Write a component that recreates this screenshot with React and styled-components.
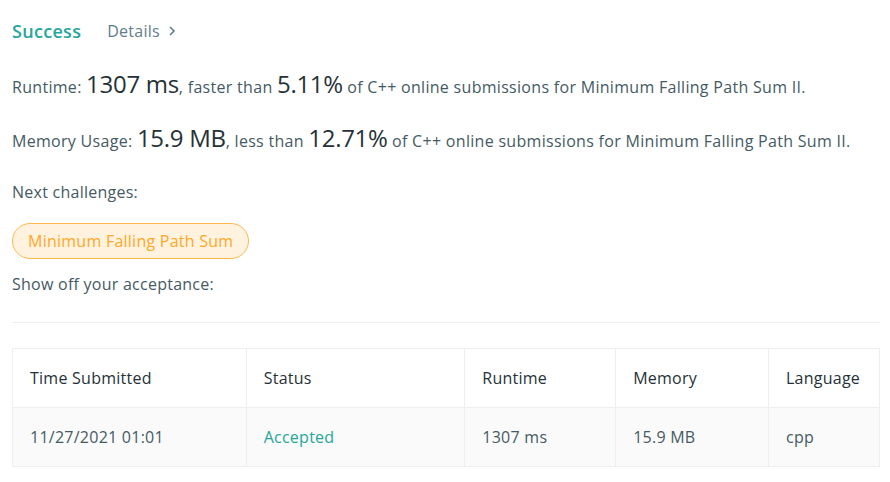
import React from "react";
import styled, { createGlobalStyle } from "styled-components";

const GlobalStyle = createGlobalStyle`
  body {
    margin: 0;
    background: #fff;
    font-family: "Open Sans", "Noto Sans", sans-serif;
    color: #455a64;
  }
`;

const Page = styled.div`
  padding: 0 10px 0 12px;
  width: 890px;
  box-sizing: border-box;
`;

const ResultHeader = styled.div`
  display: flex;
  align-items: center;
  height: 30px;
  margin-top: 16px;
`;

const Status = styled.span`
  color: #26a69a;
  font-size: 18px;
  font-weight: 600;
  letter-spacing: 0.3px;
`;

const DetailsLink = styled.span`
  display: flex;
  align-items: center;
  color: #607d8b;
  font-size: 16px;
  letter-spacing: 0.25px;
  margin-left: 26px;

  svg {
    margin-left: 8px;
  }
`;

const StatLine = styled.p`
  margin: 0;
  font-size: 16px;
  line-height: 32px;
  letter-spacing: 0.3px;
  margin-top: ${props => props.top};
  white-space: nowrap;
`;

const Big = styled.span`
  font-size: 24px;
  color: #263238;
  letter-spacing: -0.3px;
`;

const Label = styled.p`
  margin: 0;
  font-size: 16px;
  line-height: 24px;
  letter-spacing: 0.25px;
  margin-top: ${props => props.top};
`;

const ChallengePill = styled.span`
  display: inline-block;
  margin-top: 19px;
  padding: 0 15px;
  height: 34px;
  line-height: 34px;
  border: 1px solid #ffb74d;
  border-radius: 18px;
  background: #fff3e0;
  color: #ffa726;
  font-size: 16px;
  letter-spacing: 0.25px;
`;

const Divider = styled.hr`
  margin: 26px 0 25px;
  border: 0;
  border-top: 1px solid #eeeeee;
`;

const Table = styled.table`
  width: 868px;
  border-collapse: collapse;
  font-size: 16px;
  letter-spacing: 0.25px;
`;

const HeadCell = styled.th`
  text-align: left;
  font-weight: 400;
  color: #263238;
  height: 59px;
  padding: 0 17px;
  border: 1px solid #eeeeee;
  width: ${props => props.w}px;
  box-sizing: border-box;
`;

const BodyRow = styled.tr`
  background: #fafafa;
`;

const Cell = styled.td`
  height: 58px;
  padding: 0 17px;
  border: 1px solid #eeeeee;
  color: ${props => (props.accepted ? "#26a69a" : "#455a64")};
`;

const Chevron = () => (
  <svg width="8" height="12" viewBox="0 0 8 12">
    <path d="M2 2l4 4-4 4" fill="none" stroke="#607d8b" strokeWidth="1.6" />
  </svg>
);

const columns = [
  { name: "Time Submitted", w: 234 },
  { name: "Status", w: 219 },
  { name: "Runtime", w: 151 },
  { name: "Memory", w: 153 },
  { name: "Language", w: 111 }
];

const row = ["11/27/2021 01:01", "Accepted", "1307 ms", "15.9 MB", "cpp"];

function App() {
  return (
    <Page>
      <GlobalStyle />
      <ResultHeader>
        <Status>Success</Status>
        <DetailsLink>
          Details
          <Chevron />
        </DetailsLink>
      </ResultHeader>
      <StatLine top="22px">
        Runtime: <Big>1307 ms</Big>, faster than <Big>5.11%</Big> of C++ online
        submissions for Minimum Falling Path Sum II.
      </StatLine>
      <StatLine top="19px">
        Memory Usage: <Big>15.9 MB</Big>, less than <Big>12.71%</Big> of C++
        online submissions for Minimum Falling Path Sum II.
      </StatLine>
      <Label top="23px">Next challenges:</Label>
      <ChallengePill>Minimum Falling Path Sum</ChallengePill>
      <Label top="13px">Show off your acceptance:</Label>
      <Divider />
      <Table>
        <thead>
          <tr>
            {columns.map(c => (
              <HeadCell key={c.name} w={c.w}>
                {c.name}
              </HeadCell>
            ))}
          </tr>
        </thead>
        <tbody>
          <BodyRow>
            {row.map((v, i) => (
              <Cell key={i} accepted={v === "Accepted"}>
                {v}
              </Cell>
            ))}
          </BodyRow>
        </tbody>
      </Table>
    </Page>
  );
}

export default App;
